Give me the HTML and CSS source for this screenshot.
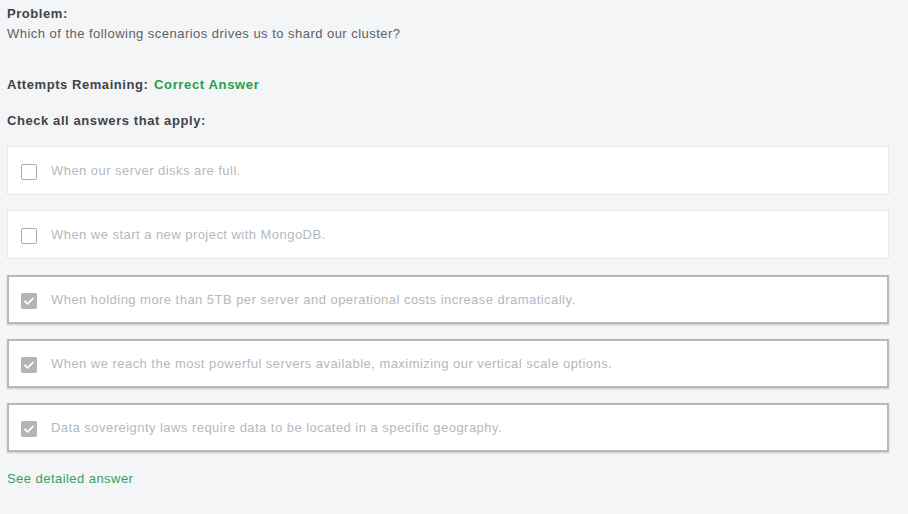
FILE: index.html
```html
<!DOCTYPE html>
<html>
<head>
<meta charset="utf-8">
<link rel="stylesheet" href="styles.css">
</head>
<body>
<div class="page">
  <div class="label">Problem:</div>
  <div class="question">Which of the following scenarios drives us to shard our cluster?</div>
  <div class="attempts"><span class="label">Attempts Remaining:</span> <span class="correct">Correct Answer</span></div>
  <div class="label check-all">Check all answers that apply:</div>
  <div class="options">
    <div class="option">
      <span class="box"></span>
      <span class="text">When our server disks are full.</span>
    </div>
    <div class="option">
      <span class="box"></span>
      <span class="text">When we start a new project with MongoDB.</span>
    </div>
    <div class="option checked shifted">
      <span class="box"><svg viewBox="0 0 16 16" width="16" height="16"><path d="M4 8.3l2.6 2.5L12 5.4" fill="none" stroke="#fff" stroke-width="1.8" stroke-linecap="round" stroke-linejoin="round"/></svg></span>
      <span class="text">When holding more than 5TB per server and operational costs increase dramatically.</span>
    </div>
    <div class="option checked">
      <span class="box"><svg viewBox="0 0 16 16" width="16" height="16"><path d="M4 8.3l2.6 2.5L12 5.4" fill="none" stroke="#fff" stroke-width="1.8" stroke-linecap="round" stroke-linejoin="round"/></svg></span>
      <span class="text">When we reach the most powerful servers available, maximizing our vertical scale options.</span>
    </div>
    <div class="option checked">
      <span class="box"><svg viewBox="0 0 16 16" width="16" height="16"><path d="M4 8.3l2.6 2.5L12 5.4" fill="none" stroke="#fff" stroke-width="1.8" stroke-linecap="round" stroke-linejoin="round"/></svg></span>
      <span class="text">Data sovereignty laws require data to be located in a specific geography.</span>
    </div>
  </div>
  <a class="detail" href="#">See detailed answer</a>
</div>
</body>
</html>
```

FILE: styles.css
```css
* { box-sizing: border-box; }
html, body { margin: 0; padding: 0; }
body {
  background: #f4f5f7;
  font-family: "Liberation Sans", Arial, sans-serif;
  font-size: 13px;
  color: #5d6166;
}
.page {
  padding: 5px 19px 0 7px;
}
.label {
  font-weight: bold;
  color: #3f4347;
  line-height: 18px;
  letter-spacing: 0.56px;
}
.question {
  line-height: 20px;
  margin-top: 1px;
  letter-spacing: 0.47px;
}
.attempts {
  margin-top: 32px;
  line-height: 18px;
}
.attempts .label { display: inline; }
.correct {
  color: #1fa04a;
  font-weight: bold;
  letter-spacing: 0.65px;
  margin-left: 2px;
}
.check-all {
  margin-top: 18px;
  letter-spacing: 0.58px;
}
.options {
  margin-top: 16px;
  display: flex;
  flex-direction: column;
  gap: 15px;
}
.option {
  height: 49px;
  background: #fff;
  border: 1px solid #e6e8eb;
  display: flex;
  align-items: center;
  padding-left: 13px;
}
.option.shifted { margin-top: 1px; }
.option.checked {
  border: 2px solid #b6babe;
  padding-left: 12px;
  box-shadow: 0 1px 2px rgba(0,0,0,0.18);
}
.box {
  width: 16px;
  height: 16px;
  border: 1.5px solid #a9adb1;
  border-radius: 2px;
  flex: none;
  margin-top: 3px;
  display: flex;
}
.checked .box {
  background: #b1b5b9;
  border-color: #b1b5b9;
}
.checked .box svg { margin: -1.5px; }
.text {
  margin-left: 14px;
  color: #b5b8bc;
  letter-spacing: 0.46px;
}
.detail {
  display: block;
  margin-top: 18px;
  line-height: 18px;
  color: #3a9d5d;
  text-decoration: none;
  letter-spacing: 0.45px;
}
```
